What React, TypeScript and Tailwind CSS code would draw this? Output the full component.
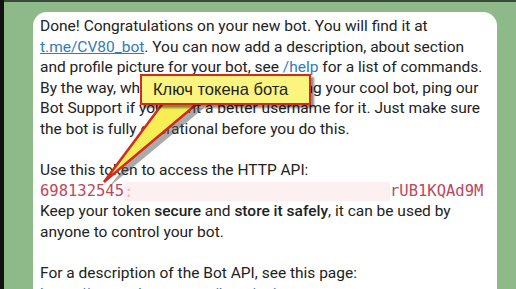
import React from 'react';

const lineCls = 'whitespace-nowrap h-[20.6px] leading-[20.6px]';

export default function App() {
  return (
    <div className="relative w-[516px] h-[289px] overflow-hidden bg-[#8dba88]">
      {/* window edges */}
      <div className="absolute left-0 top-0 w-full h-[2px] bg-[#3a4a3a]" />
      <div className="absolute left-0 top-0 h-full w-[4px] bg-[#111]" />

      <div className="flex pl-[33px] pt-[12px] pr-[19px]">
        <div
          className="flex-1 bg-white rounded-t-[14px] px-[7px] pt-[4px] text-[15.5px] text-[#222]"
          style={{ fontFamily: 'Roboto, "Noto Sans", sans-serif' }}
        >
          <div className={lineCls}>Done! Congratulations on your new bot. You will find it at</div>
          <div className={lineCls}>
            <span className="text-[#2f7bbd] underline">t.me/CV80_bot</span>. You can now add a description, about section
          </div>
          <div className={lineCls}>
            and profile picture for your bot, see <span className="text-[#2f7bbd]">/help</span> for a list of commands.
          </div>
          <div className={lineCls}>By the way, when you've finished creating your cool bot, ping our</div>
          <div className={lineCls}>Bot Support if you want a better username for it. Just make sure</div>
          <div className={lineCls}>the bot is fully operational before you do this.</div>
          <div className={lineCls} />
          <div className={lineCls}>Use this token to access the HTTP API:</div>
          <div
            className={`${lineCls} flex items-center text-[#c2465a] text-[15.5px]`}
            style={{ fontFamily: '"DejaVu Sans Mono", monospace' }}
          >
            <span>698132545</span>
            <span className="w-[266px] h-[19px] bg-[#fcf0f1] text-[#e9b9c0]">:</span>
            <span>rUB1KQAd9M</span>
          </div>
          <div className={lineCls}>
            Keep your token <span className="font-medium">secure</span> and <span className="font-medium">store it safely</span>, it can be used by
          </div>
          <div className={lineCls}>anyone to control your bot.</div>
          <div className={lineCls} />
          <div className={lineCls}>For a description of the Bot API, see this page:</div>
          <div className={`${lineCls} text-[#2f7bbd] underline`}>https://core.telegram.org/bots/api</div>
        </div>
      </div>

      {/* callout arrow */}
      <svg className="absolute left-0 top-0" width="516" height="289" viewBox="0 0 516 289">
        <polygon points="168,106 202,106 107,185" fill="#555" opacity="0.5" transform="translate(2,2)" />
        <polygon points="163,103 198,103 104,182" fill="#f7ee55" stroke="#d22a1e" strokeWidth="2.5" strokeLinejoin="miter" />
      </svg>

      {/* callout box */}
      <div className="absolute left-[140px] top-[74px] w-[171px] h-[31px] bg-[#fbf47e] border-2 border-[#d22a1e] shadow-[3px_3px_2px_rgba(0,0,0,0.45)] flex items-center pl-[11px]">
        <span className="text-[16.5px] text-[#222]" style={{ fontFamily: '"Liberation Sans", Arial, sans-serif' }}>
          Ключ токена бота
        </span>
      </div>
    </div>
  );
}
